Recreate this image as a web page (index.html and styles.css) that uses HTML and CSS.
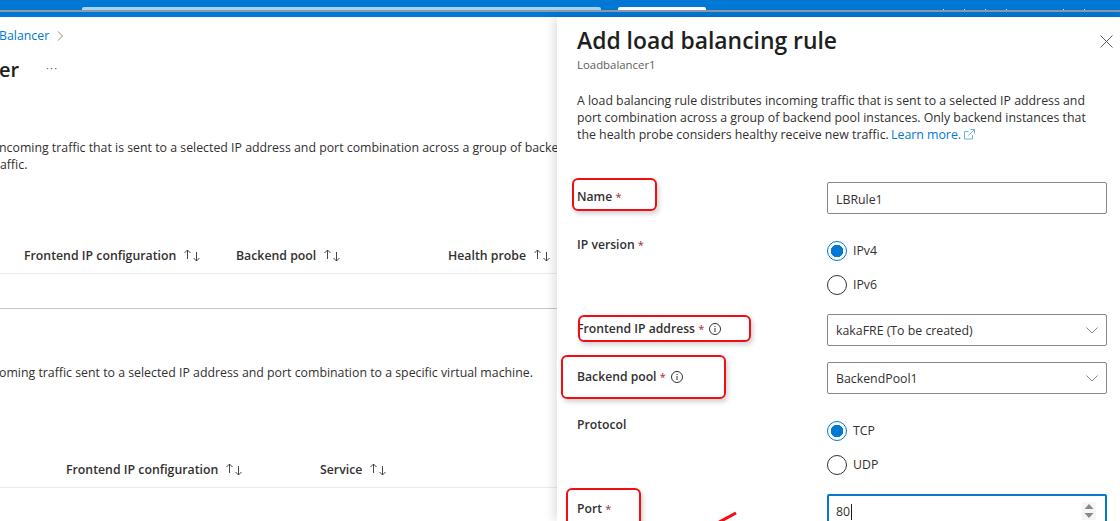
FILE: index.html
```html
<!DOCTYPE html>
<html lang="en">
<head>
<meta charset="utf-8">
<title>Add load balancing rule</title>
<link rel="stylesheet" href="styles.css">
</head>
<body>
<div class="page">
  <header class="topbar">
    <div class="tabs">
      <span class="tab tab-light"></span>
      <span class="tab tab-white"></span>
      <span class="ticks"><i></i><i></i><i></i><i></i><i class="far"></i><i></i></span>
    </div>
    <div class="strip"></div>
  </header>
  <div class="content">
    <main class="left">
      <nav class="crumb"><a class="link crumb-link">Balancer</a>
        <svg class="crumb-chev" width="7" height="10" viewBox="0 0 7 10"><path d="M1 .5 5.500 5 1 9.500" fill="none" stroke="#8a8886"/></svg>
      </nav>
      <div class="heading"><h1 class="page-title">er</h1><span class="more">···</span></div>
      <p class="para para-one">ncoming traffic that is sent to a selected IP address and port combination across a group of backe<br><span class="tail">affic.</span></p>
      <div class="thead thead-one">
        <span class="th">Frontend IP configuration <svg class="sort" width="16" height="13" viewBox="0 0 16 13"><path d="M3.500 10V1M.5 4l3-3 3 3M12.500 3v9M9.500 9l3 3 3-3" fill="none" stroke="#484644"/></svg></span>
        <span class="th">Backend pool <svg class="sort" width="16" height="13" viewBox="0 0 16 13"><path d="M3.500 10V1M.5 4l3-3 3 3M12.500 3v9M9.500 9l3 3 3-3" fill="none" stroke="#484644"/></svg></span>
        <span class="th">Health probe <svg class="sort" width="16" height="13" viewBox="0 0 16 13"><path d="M3.500 10V1M.5 4l3-3 3 3M12.500 3v9M9.500 9l3 3 3-3" fill="none" stroke="#484644"/></svg></span>
      </div>
      <div class="empty-row"></div>
      <p class="para para-two">oming traffic sent to a selected IP address and port combination to a specific virtual machine.</p>
      <div class="thead thead-two">
        <span class="th">Frontend IP configuration <svg class="sort" width="16" height="13" viewBox="0 0 16 13"><path d="M3.500 10V1M.5 4l3-3 3 3M12.500 3v9M9.500 9l3 3 3-3" fill="none" stroke="#484644"/></svg></span>
        <span class="th">Service <svg class="sort" width="16" height="13" viewBox="0 0 16 13"><path d="M3.500 10V1M.5 4l3-3 3 3M12.500 3v9M9.500 9l3 3 3-3" fill="none" stroke="#484644"/></svg></span>
      </div>
    </main>
    <aside class="panel">
      <div class="panel-head">
        <div>
          <h2 class="panel-title">Add load balancing rule</h2>
          <div class="panel-sub">Loadbalancer1</div>
        </div>
        <svg class="close" width="13" height="13" viewBox="0 0 13 13"><path d="M.5.500l12 12M12.500.500l-12 12" fill="none" stroke="#605e5c"/></svg>
      </div>
      <p class="desc">A load balancing rule distributes incoming traffic that is sent to a selected IP address and port combination across a group of backend pool instances. Only backend instances that the health probe considers healthy receive new traffic. <a class="link learn">Learn more.</a>
        <svg class="ext" width="11" height="11" viewBox="0 0 11 11"><path d="M8.500 6v4h-8V2.500h4M6.500.5h4v4M10.500.5 4.500 6.500" fill="none" stroke="#6cb0e6"/></svg></p>
      <form class="form">
        <label class="lbl">Name <span class="req">*</span></label>
        <div class="field field-low">LBRule1</div>

        <label class="lbl">IP version <span class="req">*</span></label>
        <div class="radios">
          <div class="radio-row"><span class="radio radio-on"></span>IPv4</div>
          <div class="radio-row"><span class="radio"></span>IPv6</div>
        </div>

        <label class="lbl">Frontend IP address <span class="req">*</span>
          <svg class="info" width="12" height="12" viewBox="0 0 12 12"><circle cx="6" cy="6" r="5.500" fill="none" stroke="#323130"/><path d="M6 5v4M6 3v1" fill="none" stroke="#323130"/></svg></label>
        <div class="field select">kakaFRE (To be created)
          <svg class="chev" width="12" height="7" viewBox="0 0 12 7"><path d="M.5.500 6 6l5.500-5.500" fill="none" stroke="#8a8886"/></svg></div>

        <label class="lbl">Backend pool <span class="req">*</span>
          <svg class="info" width="12" height="12" viewBox="0 0 12 12"><circle cx="6" cy="6" r="5.500" fill="none" stroke="#323130"/><path d="M6 5v4M6 3v1" fill="none" stroke="#323130"/></svg></label>
        <div class="field select">BackendPool1
          <svg class="chev" width="12" height="7" viewBox="0 0 12 7"><path d="M.5.500 6 6l5.500-5.500" fill="none" stroke="#8a8886"/></svg></div>

        <label class="lbl">Protocol</label>
        <div class="radios">
          <div class="radio-row"><span class="radio radio-on"></span>TCP</div>
          <div class="radio-row"><span class="radio"></span>UDP</div>
        </div>

        <label class="lbl">Port <span class="req">*</span></label>
        <div class="field focus"><span class="caret">80</span>
          <span class="spin"><svg width="10" height="14" viewBox="0 0 10 14"><path d="M5 0l4.500 5H.5zM5 14 .5 9h9z" fill="#8a8886"/></svg></span></div>
      </form>
    </aside>
  </div>
  <div class="mark mark-name"></div>
  <div class="mark mark-front"></div>
  <div class="mark mark-back"></div>
  <div class="mark mark-port"></div>
  <svg class="arrow" width="40" height="16" viewBox="0 0 40 16"><path d="M36 1 10 15" stroke="#f20d14" stroke-width="3" fill="none"/></svg>
</div>
</body>
</html>
```
FILE: styles.css
```css
* { box-sizing: border-box; }
html, body { margin: 0; padding: 0; background: #fff; }
body { font-family: "Open Sans", "Liberation Sans", sans-serif; font-size: 12.33px; line-height: 17px; color: #323130; }
.page { position: relative; width: 1120px; height: 521px; overflow: hidden; }

.topbar { height: 17px; background: #0078d4; padding-top: 7px; }
.tabs { display: flex; height: 3px; padding-left: 82px; }
.tab { display: block; height: 3px; border-radius: 2px 2px 0 0; }
.tab-light { width: 519px; background: #a5d3f5; }
.tab-white { width: 88px; margin-left: 17px; background: #fff; }
.ticks { display: flex; margin-left: 237px; gap: 20px; align-items: flex-end; }
.ticks i { display: block; width: 1px; height: 1px; background: #d7e6f2; }
.ticks .far { margin-left: 36px; }
.strip { height: 2px; background: #8f9aa6; }

.content { display: flex; height: 504px; }
.left { width: 557px; flex: none; overflow: hidden; white-space: nowrap; }
.link { color: #0078d4; }
.crumb { display: flex; align-items: center; padding-top: 10px; height: 27px; margin-left: -1px; gap: 8px; }
.heading { display: flex; align-items: center; height: 28px; margin-top: 12px; margin-left: -1px; }
.page-title { margin: 0; font-size: 20px; line-height: 28px; font-weight: 600; color: #201f1e; width: 47px; }
.more { font-size: 11px; color: #605e5c; letter-spacing: 1.2px; margin-top: -5px; }
.para { margin: 0; }
.para-one { margin-top: 55px; margin-left: -1px; }
.tail { margin-left: 1px; }
.para-two { margin-top: 55px; margin-left: -1px; }
.thead { display: grid; align-items: center; height: 37px; border-bottom: 1px solid #edebe9; }
.thead-one { margin-top: 64px; padding-left: 24px; grid-template-columns: 212px 212px auto; }
.thead-two { margin-top: 70px; padding-left: 66px; grid-template-columns: 254px auto; }
.th { display: flex; align-items: center; font-weight: 550; font-size: 12.3px; color: #323130; gap: 8px; }
.sort { flex: none; margin-top: 1px; }
.empty-row { height: 35px; border-bottom: 1px solid #c8c6c4; }

.panel { position: relative; flex: 1; padding-left: 20px; background: #fff; box-shadow: -3px 0 10px rgba(0, 0, 0, .13); }
.panel-head { display: flex; justify-content: space-between; padding-top: 8px; padding-right: 7px; }
.panel-title { margin: 0; font-size: 22.9px; line-height: 32px; font-weight: 600; color: #201f1e; }
.panel-sub { font-size: 11.4px; line-height: 16px; color: #605e5c; }
.close { margin-top: 10px; }
.desc { margin: 19px 0 0; width: 520px; }
.learn { margin-left: -1px; }
.ext { margin-left: 0; vertical-align: -1px; }

.form { display: grid; grid-template-columns: 250px 280px; row-gap: 16px; margin-top: 39px; }
.lbl { display: block; padding-top: 6px; font-weight: 550; font-size: 12.2px; color: #323130; }
.req { color: #a4262c; font-weight: 400; font-size: 11px; }
.info { vertical-align: -2px; margin-left: 2px; }
.field { display: flex; align-items: center; justify-content: space-between; height: 32px; padding: 0 8px; border: 1px solid #8a8886; border-radius: 2px; }
.field-low { padding-top: 2px; }
.chev { flex: none; }
.focus { border: 2px solid #0078d4; padding: 2px 9px 0 7px; height: 34px; }
.caret { border-right: 1px solid #201f1e; padding-right: 1px; line-height: 16px; }
.spin { display: flex; padding: 2px; margin-top: -2px; background: #f5f5f5; }
.radios { display: flex; flex-direction: column; gap: 14px; padding-top: 11px; padding-bottom: 3px; }
.radio-row { display: flex; align-items: flex-start; gap: 6px; height: 20px; line-height: 19px; }
.radio { display: block; width: 20px; height: 20px; border: 1px solid #323130; border-radius: 50%; }
.radio-on { border-color: #0078d4; background: radial-gradient(circle, #0078d4 0 6px, #fff 6.500px); }

.mark { position: absolute; border: 2px solid #f20d14; border-radius: 6px; box-shadow: 2px 3px 5px rgba(0, 0, 0, .18); }
.mark-name { left: 572px; top: 178px; width: 85px; height: 33px; }
.mark-front { left: 578px; top: 315px; width: 173px; height: 27px; }
.mark-back { left: 561px; top: 355px; width: 165px; height: 44px; }
.mark-port { left: 566px; top: 488px; width: 75px; height: 60px; }
.arrow { position: absolute; left: 700px; top: 512px; }
```
